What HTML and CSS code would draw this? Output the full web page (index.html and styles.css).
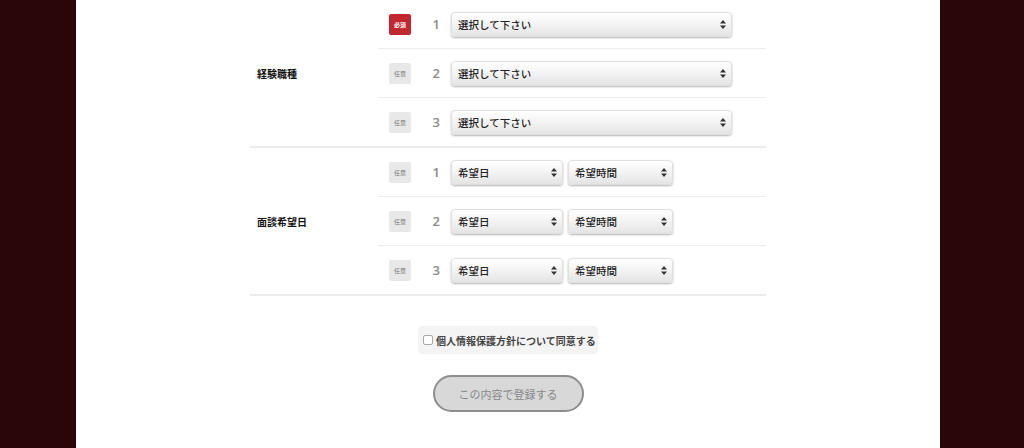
FILE: index.html
```html
<!DOCTYPE html>
<html lang="ja">
<head>
<meta charset="utf-8">
<link rel="stylesheet" href="styles.css">
</head>
<body>
<div class="page">
  <div class="form">
    <div class="section">
      <div class="label">経験職種</div>
      <div class="rows">
        <div class="row">
          <span class="badge req">必須</span><span class="num">1</span>
          <div class="sel wide"><span>選択して下さい</span><svg class="arr" width="6" height="9" viewBox="0 0 6 9"><path d="M3 0L6 3.5H0Z M3 9L0 5.5H6Z" fill="#333"/></svg></div>
        </div>
        <div class="row">
          <span class="badge">任意</span><span class="num">2</span>
          <div class="sel wide"><span>選択して下さい</span><svg class="arr" width="6" height="9" viewBox="0 0 6 9"><path d="M3 0L6 3.5H0Z M3 9L0 5.5H6Z" fill="#333"/></svg></div>
        </div>
        <div class="row">
          <span class="badge">任意</span><span class="num">3</span>
          <div class="sel wide"><span>選択して下さい</span><svg class="arr" width="6" height="9" viewBox="0 0 6 9"><path d="M3 0L6 3.5H0Z M3 9L0 5.5H6Z" fill="#333"/></svg></div>
        </div>
      </div>
    </div>
    <div class="section">
      <div class="label">面談希望日</div>
      <div class="rows">
        <div class="row">
          <span class="badge">任意</span><span class="num">1</span>
          <div class="sel day"><span>希望日</span><svg class="arr" width="6" height="9" viewBox="0 0 6 9"><path d="M3 0L6 3.5H0Z M3 9L0 5.5H6Z" fill="#333"/></svg></div>
          <div class="sel time"><span>希望時間</span><svg class="arr" width="6" height="9" viewBox="0 0 6 9"><path d="M3 0L6 3.5H0Z M3 9L0 5.5H6Z" fill="#333"/></svg></div>
        </div>
        <div class="row">
          <span class="badge">任意</span><span class="num">2</span>
          <div class="sel day"><span>希望日</span><svg class="arr" width="6" height="9" viewBox="0 0 6 9"><path d="M3 0L6 3.5H0Z M3 9L0 5.5H6Z" fill="#333"/></svg></div>
          <div class="sel time"><span>希望時間</span><svg class="arr" width="6" height="9" viewBox="0 0 6 9"><path d="M3 0L6 3.5H0Z M3 9L0 5.5H6Z" fill="#333"/></svg></div>
        </div>
        <div class="row">
          <span class="badge">任意</span><span class="num">3</span>
          <div class="sel day"><span>希望日</span><svg class="arr" width="6" height="9" viewBox="0 0 6 9"><path d="M3 0L6 3.5H0Z M3 9L0 5.5H6Z" fill="#333"/></svg></div>
          <div class="sel time"><span>希望時間</span><svg class="arr" width="6" height="9" viewBox="0 0 6 9"><path d="M3 0L6 3.5H0Z M3 9L0 5.5H6Z" fill="#333"/></svg></div>
        </div>
      </div>
    </div>
    <div class="agree-wrap">
      <label class="agree"><span class="cb"></span>個人情報保護方針について同意する</label>
    </div>
    <div class="btn-wrap">
      <div class="btn">この内容で登録する</div>
    </div>
  </div>
</div>
</body>
</html>
```

FILE: styles.css
```css
html, body {
  margin: 0;
  padding: 0;
}
body {
  background: #2b0608;
  font-family: "Noto Sans CJK JP", "Noto Sans", sans-serif;
  height: 448px;
  overflow: hidden;
}
.page {
  margin-left: 76px;
  width: 864px;
  height: 448px;
  background: #fff;
  overflow: hidden;
}
.form {
  width: 516px;
  margin: 0 auto;
}
.section {
  display: grid;
  grid-template-columns: 128px 388px;
  border-bottom: 2px solid #ececec;
}
.label {
  display: flex;
  align-items: center;
  padding-left: 7px;
  font-size: 10px;
  font-weight: 700;
  color: #111;
}
.rows {
  display: flex;
  flex-direction: column;
}
.row {
  height: 48px;
  display: flex;
  align-items: center;
  border-bottom: 1px solid #ececec;
}
.row:last-child {
  border-bottom: none;
}
.badge {
  margin-left: 11px;
  width: 22px;
  height: 21px;
  border-radius: 2px;
  background: #e8e8e8;
  color: #777;
  font-size: 6px;
  display: flex;
  align-items: center;
  justify-content: center;
  flex-shrink: 0;
}
.badge.req {
  background: #c1272f;
  color: #fff;
  font-weight: 700;
}
.num {
  width: 29px;
  margin-right: 11px;
  text-align: right;
  font-family: "Open Sans", sans-serif;
  font-weight: 600;
  font-size: 13px;
  color: #8a8a8a;
}
.sel {
  height: 25px;
  box-sizing: border-box;
  display: flex;
  align-items: center;
  justify-content: space-between;
  padding: 0 5px 0 6px;
  border: 1px solid #e0e0e0;
  border-radius: 4px;
  background: linear-gradient(#ffffff 0%, #f3f3f3 50%, #e4e4e4 100%);
  box-shadow: 0 1px 2px rgba(0, 0, 0, 0.3);
  font-size: 10.5px;
  font-weight: 500;
  color: #222;
}
.sel.wide { width: 281px; }
.sel.day { width: 112px; margin-right: 5px; }
.sel.time { width: 105px; }
.arr { flex-shrink: 0; }
.agree-wrap {
  display: flex;
  justify-content: center;
  margin-top: 30px;
}
.agree {
  display: flex;
  align-items: center;
  height: 28px;
  width: 180px;
  box-sizing: border-box;
  padding: 0 0 0 5px;
  background: #f4f4f4;
  border-radius: 4px;
  font-size: 10px;
  font-weight: 700;
  color: #444;
}
.cb {
  width: 8px;
  height: 8px;
  border: 1px solid #a8a8a8;
  border-radius: 2px;
  background: #fff;
  margin-right: 3px;
}
.btn-wrap {
  display: flex;
  justify-content: center;
  margin-top: 21px;
}
.btn {
  width: 151px;
  height: 37px;
  box-sizing: border-box;
  border: 2px solid #8e8e8e;
  border-radius: 19px;
  background: #d8d8d8;
  color: #888;
  font-size: 11px;
  display: flex;
  align-items: center;
  justify-content: center;
}
```
